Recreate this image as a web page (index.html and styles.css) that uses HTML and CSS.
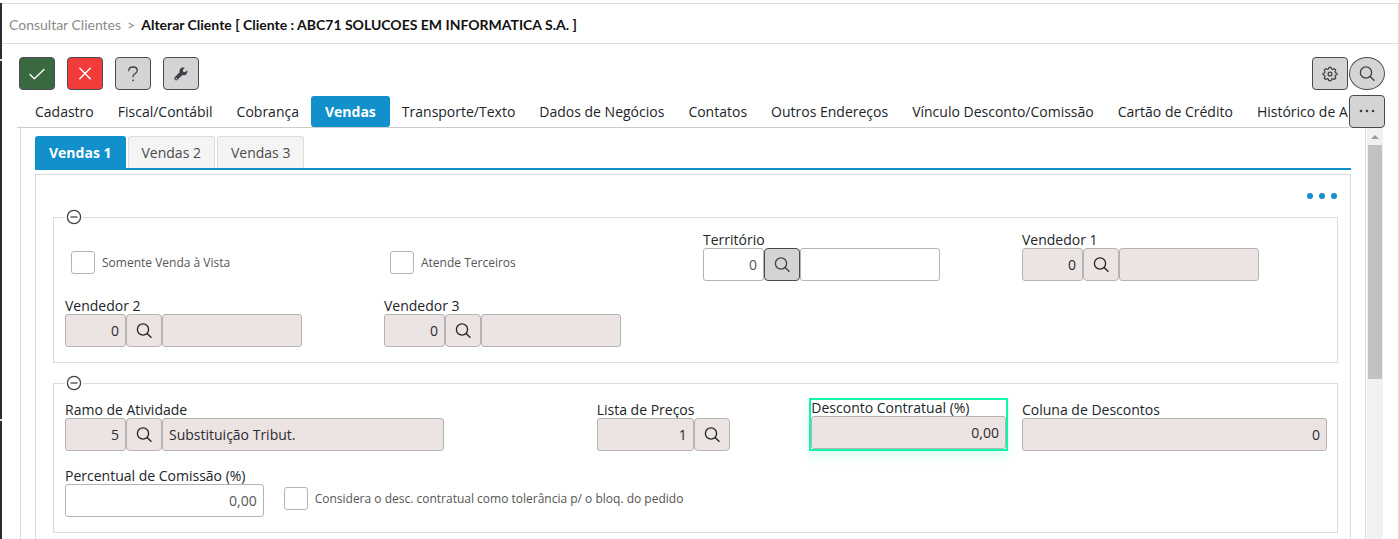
FILE: index.html
```
<!DOCTYPE html>
<html lang="pt-BR">
<head>
    <meta charset="UTF-8">
    <meta name="viewport" content="width=device-width, initial-scale=1.0">
    <title>Alterar Cliente</title>
    <link rel="stylesheet" href="styles.css">
</head>
<body>
    <!-- Shared icon shapes -->
    <svg class="icon-defs" aria-hidden="true">
        <symbol id="icon-search" viewBox="0 0 16 16">
            <circle cx="7" cy="6.500" r="5.600" fill="none" stroke="currentColor" stroke-width="1.300"/>
            <path d="M11.100 10.600L15 14.300" fill="none" stroke="currentColor" stroke-width="1.400" stroke-linecap="round"/>
        </symbol>
        <symbol id="icon-minus" viewBox="0 0 16 16">
            <circle cx="8" cy="8" r="6.600" fill="none" stroke="currentColor" stroke-width="1.300"/>
            <path d="M4.500 8h7" fill="none" stroke="currentColor" stroke-width="1.300"/>
        </symbol>
    </svg>

    <div class="side-strip"></div>

    <div class="page">
        <header class="breadcrumb">
            <a href="#">Consultar Clientes</a>
            <span class="separator">&gt;</span>
            <h1>Alterar Cliente [ Cliente : ABC71 SOLUCOES EM INFORMATICA S.A. ]</h1>
        </header>

        <div class="toolbar">
            <button class="btn btn-confirm" type="button" aria-label="Confirmar">
                <svg class="icon" viewBox="0 0 16 16"><path d="M1 8.600l4.300 4.200L15 3.400" fill="none" stroke="currentColor" stroke-width="1.400" stroke-linecap="round" stroke-linejoin="round"/></svg>
            </button>
            <button class="btn btn-cancel" type="button" aria-label="Cancelar">
                <svg class="icon" viewBox="0 0 16 16"><path d="M2.800 2.300l10.400 10.400M13.200 2.300L2.800 12.700" fill="none" stroke="currentColor" stroke-width="1.400" stroke-linecap="round"/></svg>
            </button>
            <button class="btn" type="button" aria-label="Ajuda">
                <svg class="icon" viewBox="0 0 16 16"><path d="M3.700 4.700C3.800 2.300 5.600 1 8 1s4.300 1.400 4.300 3.600C12.300 7.600 8 7.400 8 10.700" fill="none" stroke="currentColor" stroke-width="1.300" stroke-linecap="round"/><circle cx="8" cy="14.300" r="0.900" fill="currentColor"/></svg>
            </button>
            <button class="btn" type="button" aria-label="Ferramentas">
                <svg class="icon" viewBox="0 0 16 16"><path d="M14.200 4.300l-2.300 1.900-1.700-.4-.5-1.700 2-2.300C10 1.300 8.200 1.700 7.200 3c-.8 1-.9 2.200-.5 3.300L1.800 11.100a1.900 1.900 0 0 0 0 2.700 1.900 1.900 0 0 0 2.700 0l4.900-4.700c1.200.4 2.600.2 3.600-.7 1.200-1.100 1.700-2.700 1.200-4.100zM3.200 11.800a.8.8 0 1 1 0 1.600.8.8 0 0 1 0-1.600z" fill="currentColor" fill-rule="evenodd"/></svg>
            </button>
            <div class="toolbar-right">
                <button class="btn" type="button" aria-label="Configurações">
                    <svg class="icon" viewBox="0 0 16 16"><path d="M6.900 1.300h2.200l.5 1.700 1.100.5 1.600-.9 1.500 1.500-.9 1.600.5 1.100 1.600.5v1.500l-1.600.5-.5 1.100.9 1.600-1.500 1.500-1.600-.9-1.100.5-.5 1.600H6.900l-.5-1.600-1.100-.5-1.600.9-1.500-1.500.9-1.600-.5-1.100-1.600-.5V7.300l1.600-.5.5-1.100-.9-1.600 1.500-1.500 1.600.9L6.400 3z" fill="none" stroke="currentColor" stroke-width="1.200" stroke-linejoin="round"/><circle cx="8" cy="8" r="1.900" fill="none" stroke="currentColor" stroke-width="1.300"/></svg>
                </button>
                <button class="btn btn-round" type="button" aria-label="Pesquisar"><svg class="icon"><use href="#icon-search"/></svg></button>
            </div>
        </div>

        <div class="tabs-row">
            <nav class="tabs">
                <a href="#">Cadastro</a>
                <a href="#">Fiscal/Contábil</a>
                <a href="#">Cobrança</a>
                <a href="#" class="active">Vendas</a>
                <a href="#">Transporte/Texto</a>
                <a href="#">Dados de Negócios</a>
                <a href="#">Contatos</a>
                <a href="#">Outros Endereços</a>
                <a href="#">Vínculo Desconto/Comissão</a>
                <a href="#">Cartão de Crédito</a>
                <a href="#">Histórico de A</a>
            </nav>
            <button class="btn" type="button" aria-label="Mais abas">
                <svg class="icon" viewBox="0 0 16 16" fill="currentColor"><circle cx="2" cy="7" r="1.300"/><circle cx="8" cy="7" r="1.300"/><circle cx="14" cy="7" r="1.300"/></svg>
            </button>
        </div>

        <div class="content">
            <main class="panel">
                <nav class="subtabs">
                    <a href="#" class="active">Vendas 1</a>
                    <a href="#">Vendas 2</a>
                    <a href="#">Vendas 3</a>
                </nav>

                <form class="form">
                    <button class="more" type="button" aria-label="Mais opções">
                        <span></span><span></span><span></span>
                    </button>

                    <fieldset>
                        <legend><svg class="icon"><use href="#icon-minus"/></svg></legend>
                        <div class="grid">
                            <label class="check check-inset span-3"><input type="checkbox">Somente Venda à Vista</label>
                            <label class="check check-inset span-3"><input type="checkbox">Atende Terceiros</label>
                            <div class="field span-3">
                                <label for="territorio">Território</label>
                                <div class="lookup">
                                    <input class="code" id="territorio" type="text" value="0">
                                    <button class="btn" type="button" aria-label="Buscar território"><svg class="icon"><use href="#icon-search"/></svg></button>
                                    <input class="name" type="text" aria-label="Nome do território">
                                </div>
                            </div>
                            <div class="field span-3">
                                <label for="vendedor1">Vendedor 1</label>
                                <div class="lookup">
                                    <input class="code" id="vendedor1" type="text" value="0" readonly>
                                    <button class="btn btn-readonly" type="button" aria-label="Buscar vendedor 1"><svg class="icon"><use href="#icon-search"/></svg></button>
                                    <input class="name" type="text" aria-label="Nome do vendedor 1" readonly>
                                </div>
                            </div>
                            <div class="field span-3">
                                <label for="vendedor2">Vendedor 2</label>
                                <div class="lookup">
                                    <input class="code" id="vendedor2" type="text" value="0" readonly>
                                    <button class="btn btn-readonly" type="button" aria-label="Buscar vendedor 2"><svg class="icon"><use href="#icon-search"/></svg></button>
                                    <input class="name" type="text" aria-label="Nome do vendedor 2" readonly>
                                </div>
                            </div>
                            <div class="field span-3">
                                <label for="vendedor3">Vendedor 3</label>
                                <div class="lookup">
                                    <input class="code" id="vendedor3" type="text" value="0" readonly>
                                    <button class="btn btn-readonly" type="button" aria-label="Buscar vendedor 3"><svg class="icon"><use href="#icon-search"/></svg></button>
                                    <input class="name" type="text" aria-label="Nome do vendedor 3" readonly>
                                </div>
                            </div>
                        </div>
                    </fieldset>

                    <fieldset>
                        <legend><svg class="icon"><use href="#icon-minus"/></svg></legend>
                        <div class="grid">
                            <div class="field span-5">
                                <label for="ramo">Ramo de Atividade</label>
                                <div class="lookup">
                                    <input class="code" id="ramo" type="text" value="5" readonly>
                                    <button class="btn btn-readonly" type="button" aria-label="Buscar ramo"><svg class="icon"><use href="#icon-search"/></svg></button>
                                    <input class="name name-wide" type="text" value="Substituição Tribut." aria-label="Nome do ramo" readonly>
                                </div>
                            </div>
                            <div class="field span-2">
                                <label for="lista">Lista de Preços</label>
                                <div class="lookup">
                                    <input class="code code-wide" id="lista" type="text" value="1" readonly>
                                    <button class="btn btn-readonly" type="button" aria-label="Buscar lista"><svg class="icon"><use href="#icon-search"/></svg></button>
                                </div>
                            </div>
                            <div class="field highlight span-2">
                                <label for="desconto">Desconto Contratual (%)</label>
                                <input class="number" id="desconto" type="text" value="0,00" readonly>
                            </div>
                            <div class="field span-3">
                                <label for="coluna">Coluna de Descontos</label>
                                <input class="number" id="coluna" type="text" value="0" readonly>
                            </div>
                            <div class="field span-2">
                                <label for="comissao">Percentual de Comissão (%)</label>
                                <input class="number" id="comissao" type="text" value="0,00">
                            </div>
                            <label class="check check-inset span-5"><input type="checkbox">Considera o desc. contratual como tolerância p/ o bloq. do pedido</label>
                        </div>
                    </fieldset>
                </form>
            </main>

            <div class="scrollbar">
                <div class="scroll-arrow"></div>
                <div class="scroll-thumb"></div>
            </div>
        </div>
    </div>
</body>
</html>
```
FILE: styles.css
```
* {
    margin: 0;
    padding: 0;
    box-sizing: border-box;
}

body {
    display: flex;
    height: 100vh;
    overflow: hidden;
    padding-top: 3px;
    background-color: #fff;
    color: #212529;
    font-family: "Open Sans", sans-serif;
    font-size: 14px;
}

a {
    color: inherit;
    text-decoration: none;
}

button,
input {
    font: inherit;
    color: inherit;
}

.icon-defs {
    position: absolute;
    width: 0;
    height: 0;
}

.icon {
    display: block;
    width: 16px;
    height: 16px;
}

/* Dark edge of the side menu */
.side-strip {
    width: 2px;
    flex: none;
    background: repeating-linear-gradient(#2f2c36 0 56px, #ddd 56px 58px, #2f2c36 58px 360px);
}

.page {
    flex: 1;
    min-width: 0;
    display: flex;
    flex-direction: column;
    border-top: 1px solid #dcdcdc;
    border-right: 1px solid #dcdcdc;
}

.breadcrumb {
    display: flex;
    align-items: center;
    height: 40px;
    flex: none;
    padding: 2px 7px 0;
    gap: 6px;
    border-bottom: 1px solid #dcdcdc;
    font-family: Lato, sans-serif;
    font-size: 14px;
    color: #8b8b8b;
    white-space: nowrap;
}

.breadcrumb h1 {
    font-size: 14px;
    font-weight: bold;
    color: #111;
}

/* Toolbar */
.toolbar {
    display: flex;
    gap: 12px;
    padding: 13px 13px 5px 17px;
}

.toolbar-right {
    display: flex;
    gap: 1px;
    margin-left: auto;
}

.btn {
    display: flex;
    align-items: center;
    justify-content: center;
    flex: none;
    width: 36px;
    height: 33px;
    border: 1px solid #4a4a55;
    border-radius: 4px;
    background-color: #d4d4d4;
    color: #3c3f46;
    cursor: pointer;
}

.btn-confirm {
    background-color: #38693f;
    color: #fff;
}

.btn-cancel {
    background-color: #f23c3c;
    color: #fff;
}

.btn-round {
    border-radius: 50%;
}

.btn-readonly {
    border-color: #b5b3b3;
    background-color: #ece3e3;
    color: #222;
}

/* Main tabs */
.tabs-row {
    display: flex;
    padding: 0 13px 0 15px;
}

.tabs {
    display: flex;
    flex: 1;
    min-width: 0;
    overflow: hidden;
    padding: 1px 0 0 6px;
    border-bottom: 1px solid #ccc;
}

.tabs a {
    flex: none;
    padding: 0 12px;
    border-radius: 3px;
    line-height: 31px;
    white-space: nowrap;
}

.tabs a:last-child {
    padding-right: 0;
}

.tabs .active {
    padding: 0 14px;
    background-color: #1190cb;
    color: #fff;
    font-weight: bold;
}

.content {
    flex: 1;
    min-height: 0;
    display: flex;
    gap: 1px;
    padding: 0 15px 0 18px;
}

.panel {
    flex: 1;
    min-width: 0;
    display: flex;
    flex-direction: column;
    padding: 8px 14px 0 14px;
    border-left: 1px solid #dcdcdc;
    border-right: 1px solid #dcdcdc;
}

.subtabs {
    display: flex;
    flex: none;
    gap: 2px;
    margin-bottom: 4px;
    border-bottom: 2px solid #1190cb;
}

.subtabs a {
    padding: 0 13px;
    border: 1px solid #dcdcdc;
    border-bottom: none;
    border-radius: 3px 3px 0 0;
    background-color: #f4f4f4;
    color: #4b4b4b;
    line-height: 31px;
}

.subtabs .active {
    border-color: #1190cb;
    background-color: #1190cb;
    color: #fff;
    font-weight: bold;
}

/* Form */
.form {
    flex: 1 0 auto;
    display: flex;
    flex-direction: column;
    padding: 14px 12px 0 17px;
    border: 1px solid #dcdcdc;
    border-bottom: none;
}

.more {
    display: flex;
    align-self: flex-end;
    gap: 6px;
    padding: 4px 1px;
    border: none;
    background: none;
    cursor: pointer;
}

.more span {
    width: 6px;
    height: 6px;
    border-radius: 50%;
    background-color: #1190cb;
}

fieldset {
    margin-bottom: 12px;
    padding: 7px 10px 15px 11px;
    border: 1px solid #dcdcdc;
}

.more + fieldset {
    margin-top: 6px;
}

legend {
    padding: 0 1px;
    color: #444;
}

.grid {
    display: grid;
    grid-template-columns: repeat(12, minmax(0, 1fr));
    gap: 17px 14px;
}

.span-2 { grid-column: span 2; }
.span-3 { grid-column: span 3; }
.span-5 { grid-column: span 5; }

.field {
    display: flex;
    flex-direction: column;
    align-self: end;
    min-width: 0;
}

.field label {
    line-height: 16px;
    white-space: nowrap;
}

.field input {
    min-width: 0;
    height: 33px;
    padding: 0 6px;
    border: 1px solid #b5b3b3;
    border-radius: 3px;
    background-color: #fff;
    color: #555;
}

.field input:read-only {
    background-color: #ece3e3;
    color: #2b2b33;
}

.lookup {
    display: flex;
}

.field .code {
    width: 61px;
    text-align: right;
}

.field .code-wide {
    width: 97px;
}

.field .name {
    width: 140px;
}

.field .name-wide {
    width: 282px;
}

.field .number {
    width: 100%;
    text-align: right;
}

.highlight {
    border: 2px solid #12f5ac;
    box-shadow: 0 6px 10px rgba(18, 245, 172, 0.15);
}

.check {
    display: flex;
    align-items: center;
    gap: 7px;
    font-size: 12px;
    color: #555;
    white-space: nowrap;
}

.check input {
    appearance: none;
    width: 24px;
    height: 23px;
    border: 1px solid #b5b3b3;
    border-radius: 3px;
    background-color: #fff;
}

.check-inset {
    padding: 11px 0 0 6px;
}

/* Scrollbar */
.scrollbar {
    width: 16px;
    flex: none;
    padding: 0 1px;
    background-color: #f1f1f1;
}

.scroll-arrow {
    width: 8px;
    margin: 7px auto 6px;
    border: 4px solid transparent;
    border-top-width: 0;
    border-bottom-color: #9a9a9a;
}

.scroll-thumb {
    height: 57%;
    background-color: #c1c1c1;
}
```
